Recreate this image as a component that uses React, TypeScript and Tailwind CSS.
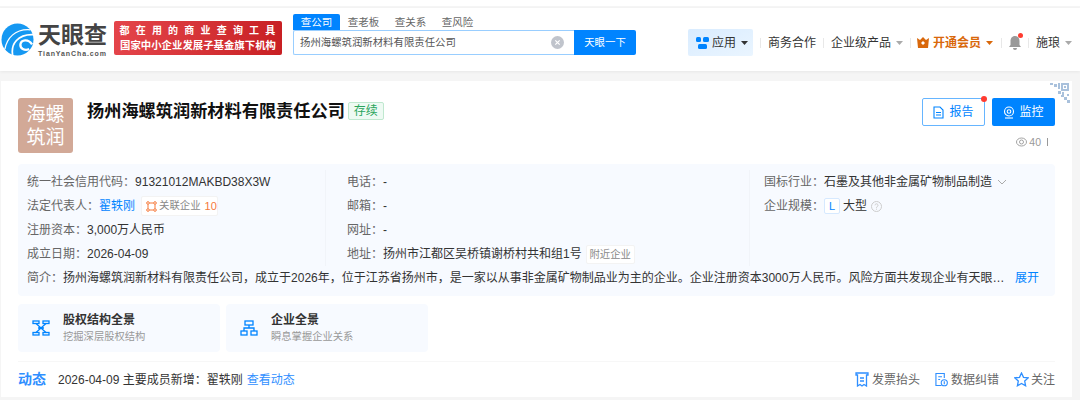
import React from "react";

const F = "[font-family:'Liberation_Sans','Noto_Sans_CJK_SC',sans-serif]";
const COLON = "\uFF1A";
const COMMA = "\uFF0C";

function Caret({ c = "#aaa" }: { c?: string }) {
  return (
    <svg width="7" height="4" viewBox="0 0 7 4" className="ml-[5px]">
      <path d="M0 0h7L3.5 4z" fill={c} />
    </svg>
  );
}

function Logo() {
  return (
    <svg width="33" height="33" viewBox="0 0 34 34">
      <circle cx="17" cy="17" r="16.5" fill="#1598f2" />
      <path d="M4 27C6 16 14 6 30 7" fill="none" stroke="#fff" strokeWidth="1.3" />
      <path d="M12 33C10 22 17 11 34 12" fill="none" stroke="#fff" strokeWidth="1.8" />
      <path d="M32 22C28 16 21 17 20 22c-.5 4 4 7 9 5" fill="none" stroke="#fff" strokeWidth="2.4" />
    </svg>
  );
}

function Divider() {
  return <span className="block w-px h-[10px] bg-[#e8e8e8]" />;
}

function Row({ label, children }: { label: string; children: React.ReactNode }) {
  return (
    <div className="h-6 flex items-center whitespace-nowrap">
      <span className="text-[#666]">{label}{COLON}</span>
      <span className="flex items-center text-[#333]">{children}</span>
    </div>
  );
}

function Entry({ icon, title, sub }: { icon: React.ReactNode; title: string; sub: string }) {
  return (
    <div className="w-[202px] h-[48px] rounded-[4px] bg-[#f7faff] flex items-center pl-[14px]">
      <span className="w-[18px] h-[18px] flex items-center justify-center">{icon}</span>
      <div className="ml-[13px]">
        <div className="text-[12px] leading-[17px] font-bold text-[#333]">{title}</div>
        <div className="text-[10.3px] leading-[15px] text-[#999]">{sub}</div>
      </div>
    </div>
  );
}

export default function App() {
  return (
    <div className={`w-[1080px] h-[400px] overflow-hidden bg-[#f5f5f5] flex flex-col ${F}`}>
      <div className="h-[6px] bg-white shrink-0" />
      <header className="mt-[2px] h-[63px] shrink-0 bg-white shadow-[0_1px_3px_rgba(0,0,0,0.06)] flex items-start">
        {/* logo */}
        <div className="ml-[1px] mt-[15px] w-[34px] h-[34px]"><Logo /></div>
        <div className="ml-[3px] mt-[14px] w-[70px]">
          <div className="text-[23px] leading-[26px] font-bold text-[#444] whitespace-nowrap">天眼查</div>
          <div className="text-[7px] leading-[9px] font-bold text-[#555] tracking-[0.9px] whitespace-nowrap mt-[1px]">TianYanCha.com</div>
        </div>
        <div className="ml-[6px] mt-[13px] w-[168px] h-[34px] rounded-[2px] bg-gradient-to-r from-[#e4444a] to-[#c81f23] text-white text-[10px] leading-[15px] font-bold flex flex-col items-center justify-center whitespace-nowrap">
          <div className="tracking-[6.2px] pl-[5px]">都在用的商业查询工具</div>
          <div className="text-[10.4px]">国家中小企业发展子基金旗下机构</div>
        </div>
        {/* search */}
        <div className="ml-[11px] mt-[6px] w-[343px]">
          <div className="flex h-[16px] text-[10.5px] leading-[16px]">
            <span className="w-[47px] text-center bg-[#0084ff] text-white rounded-t-[2px]">查公司</span>
            <span className="w-[47px] text-center text-[#666]">查老板</span>
            <span className="w-[47px] text-center text-[#666]">查关系</span>
            <span className="w-[47px] text-center text-[#666]">查风险</span>
          </div>
          <div className="flex h-[25px]">
            <div className="flex-1 border border-[#99ceff] border-r-0 rounded-l-[2px] flex items-center pl-[6px] pr-[10px] text-[10.4px] text-[#555] bg-white">
              <span className="flex-1">扬州海螺筑润新材料有限责任公司</span>
              <svg width="13" height="13" viewBox="0 0 13 13">
                <circle cx="6.5" cy="6.5" r="6.5" fill="#c0c4cc" />
                <path d="M4.3 4.3l4.400 4.400M8.700 4.300l-4.400 4.400" stroke="#fff" strokeWidth="1.2" />
              </svg>
            </div>
            <button className="w-[62px] bg-[#0084ff] text-white text-[10.4px] rounded-r-[2px]">天眼一下</button>
          </div>
        </div>
        {/* nav */}
        <nav className="ml-[52px] mt-[21px] flex items-center h-[27px] text-[12px] text-[#333] whitespace-nowrap">
          <div className="w-[65px] h-[27px] rounded-[2px] bg-gradient-to-br from-[#d9ecff] to-[#eaf5ff] flex items-center pl-[8px]">
            <svg width="13" height="12" viewBox="0 0 13 12">
              <rect x="0" y="0" width="5" height="5" rx="1.5" fill="#0084ff" />
              <rect x="7" y="0" width="6" height="5" rx="1.5" fill="#0084ff" />
              <rect x="2" y="7" width="9" height="5" rx="1.5" fill="#0084ff" />
            </svg>
            <span className="ml-[3px]">应用</span>
            <Caret c="#333" />
          </div>
          <span className="ml-[7px]"><Divider /></span>
          <span className="ml-[7px]">商务合作</span>
          <span className="ml-[7px]"><Divider /></span>
          <span className="ml-[7px]">企业级产品</span>
          <Caret />
          <span className="ml-[7px]"><Divider /></span>
          <svg width="12" height="11" viewBox="0 0 12 11" className="ml-[6px]">
            <path d="M0 1l3 2 3-3 3 3 3-2-1 10H1z" fill="#d9680b" />
            <path d="M6 4l2 2-2 2-2-2z" fill="#fff" />
          </svg>
          <span className="ml-[4px] font-bold text-[#d9680b]">开通会员</span>
          <Caret c="#d9680b" />
          <span className="ml-[8px]"><Divider /></span>
          <span className="relative ml-[7px] flex">
            <svg width="12" height="14" viewBox="0 0 12 14">
              <path d="M6 0c3 0 4.500 2.500 4.500 5v4L12 11H0l1.500-2V5C1.500 2.500 3 0 6 0z" fill="#999" />
              <path d="M4 12h4a2 2 0 0 1-4 0z" fill="#999" />
            </svg>
            <span className="absolute -top-[3px] left-[9px] w-[5px] h-[5px] rounded-full bg-[#ff3b30]" />
          </span>
          <span className="ml-[7px]"><Divider /></span>
          <span className="ml-[7px]">施琅</span>
          <Caret />
        </nav>
      </header>

      {/* card */}
      <main className="relative mt-[10px] ml-px w-[1071px] h-[316px] shrink-0 bg-white">
        <svg width="20" height="20" viewBox="0 0 20 20" className="absolute right-[2px] top-[2px]" fill="#a9c1dc">
          <rect x="0" y="0" width="3" height="2" />
          <rect x="4" y="1" width="3" height="3" />
          <rect x="8" y="0" width="2" height="6" />
          <path d="M11 0h8v8h-8zM13 2v4h4V2z" fillRule="evenodd" />
          <rect x="14" y="3" width="2" height="2" />
          <rect x="8" y="8" width="3" height="3" />
          <rect x="12" y="9" width="2" height="3" />
          <rect x="11" y="12" width="3" height="2" />
          <rect x="14" y="14" width="3" height="3" />
          <rect x="17" y="11" width="2" height="2" />
          <rect x="17" y="17" width="3" height="3" />
        </svg>
        <div className="flex items-start pl-[17px] pt-[17px]">
          <div className="w-[55px] h-[55px] rounded-[3px] bg-[#d2a997] text-white text-[19px] leading-[23px] text-center flex items-center justify-center">
            海螺<br />筑润
          </div>
          <div className="ml-[14px] mt-[4px] flex items-center">
            <h1 className="text-[17.2px] leading-[18px] font-bold text-[#111] whitespace-nowrap">扬州海螺筑润新材料有限责任公司</h1>
            <span className="ml-[3px] w-[36px] h-[18px] rounded-[2px] border border-[#bfe8cf] bg-[#eefaf3] text-[#2aa55c] text-[12px] leading-[16px] text-center">存续</span>
          </div>
          <div className="ml-auto mr-[17px] flex flex-col items-end">
            <div className="flex gap-[7px]">
              <button className="relative w-[63px] h-[28px] rounded-[2px] border border-[#66b5ff] text-[#0084ff] text-[12px] flex items-center justify-center bg-white">
                <svg width="11" height="13" viewBox="0 0 11 13" fill="none" stroke="#0084ff" strokeWidth="1.1">
                  <path d="M1 1h6l3 3v8H1z" />
                  <path d="M3 6.500h5M3 9h5" />
                </svg>
                <span className="ml-[5px]">报告</span>
                <span className="absolute -top-[3px] -right-[3px] w-[6px] h-[6px] rounded-full bg-[#ff3b30]" />
              </button>
              <button className="w-[63px] h-[28px] rounded-[2px] bg-[#0084ff] text-white text-[12px] flex items-center justify-center">
                <svg width="12" height="13" viewBox="0 0 12 13" fill="none" stroke="#fff" strokeWidth="1.1">
                  <circle cx="6" cy="5.500" r="4.500" />
                  <circle cx="6" cy="5.500" r="1.800" />
                  <path d="M2 12h8" />
                </svg>
                <span className="ml-[4px]">监控</span>
              </button>
            </div>
            <div className="mt-[9px] mr-[7px] flex items-center text-[10.5px] leading-[14px] text-[#999]">
              <svg width="11" height="10" viewBox="0 0 11 10" fill="none" stroke="#999" strokeWidth="0.9">
                <ellipse cx="5.500" cy="5" rx="5" ry="4" />
                <circle cx="5.500" cy="5" r="2" />
              </svg>
              <span className="ml-[2px]">40</span>
              <span className="ml-[6px] w-px h-[8px] bg-[#999]" />
            </div>
          </div>
        </div>

        {/* info */}
        <section className="mt-[11px] ml-[17px] w-[1037px] h-[132px] rounded-[4px] bg-[#f7faff] text-[12px] pl-[9px] pt-[6px]">
          <div className="flex">
            <div className="w-[299px] border-r border-[#f1f4f9]">
              <Row label="统一社会信用代码">91321012MAKBD38X3W</Row>
              <Row label="法定代表人">
                <span className="text-[#0084ff]">翟轶刚</span>
                <span className="ml-[6px] h-[20px] w-[77px] bg-white rounded-[2px] border border-[#f3f3f3] flex items-center pl-[4px] text-[10.4px] text-[#888]">
                  <svg width="11" height="11" viewBox="0 0 11 11" fill="none" stroke="#f5793a" strokeWidth="1">
                    <circle cx="2" cy="2" r="1.300" />
                    <circle cx="9" cy="2" r="1.300" />
                    <circle cx="2" cy="9" r="1.300" />
                    <circle cx="9" cy="9" r="1.300" />
                    <path d="M3.500 2h4M2 3.500v4M9 3.500v4M3.500 9h4" />
                  </svg>
                  <span className="ml-[2px]">关联企业</span>
                  <span className="ml-[4px] text-[11px] text-[#f5793a]">10</span>
                </span>
              </Row>
              <Row label="注册资本">3,000万人民币</Row>
              <Row label="成立日期">2026-04-09</Row>
            </div>
            <div className="w-[424px] pl-[21px] border-r border-[#f1f4f9]">
              <Row label="电话">-</Row>
              <Row label="邮箱">-</Row>
              <Row label="网址">-</Row>
              <Row label="地址">
                扬州市江都区吴桥镇谢桥村共和组1号
                <span className="ml-[4px] w-[49px] h-[19px] bg-white rounded-[2px] border border-[#f3f3f3] text-[10.4px] leading-[17px] text-center text-[#888]">附近企业</span>
              </Row>
            </div>
            <div className="pl-[14px]">
              <Row label="国标行业">
                石墨及其他非金属矿物制品制造
                <svg width="10" height="6" viewBox="0 0 10 6" className="ml-[5px]" fill="none" stroke="#aaa">
                  <path d="M1 1l4 4 4-4" />
                </svg>
              </Row>
              <Row label="企业规模">
                <span className="w-[16px] h-[16px] rounded-[2px] border border-[#d6e9ff] bg-white text-[#0084ff] text-[11px] leading-[14px] text-center">L</span>
                <span className="ml-[3px]">大型</span>
                <svg width="11" height="11" viewBox="0 0 11 11" className="ml-[4px]" fill="none" stroke="#ccc">
                  <circle cx="5.500" cy="5.500" r="5" />
                  <path d="M4 4.300a1.500 1.500 0 1 1 2.300 1.300c-.6.3-.8.600-.8 1.200M5.500 7.700v1" />
                </svg>
              </Row>
            </div>
          </div>
          <div className="h-6 flex items-center whitespace-nowrap">
            <span className="text-[#666]">简介{COLON}</span>
            <span className="w-[952px] text-[#333]">
              {`扬州海螺筑润新材料有限责任公司${COMMA}成立于2026年${COMMA}位于江苏省扬州市${COMMA}是一家以从事非金属矿物制品业为主的企业。企业注册资本3000万人民币。风险方面共发现企业有天眼…`}
            </span>
            <span className="text-[#0084ff]">展开</span>
          </div>
        </section>

        {/* entries */}
        <div className="mt-[8px] ml-[17px] flex gap-[6px]">
          <Entry
            title="股权结构全景"
            sub="挖掘深层股权结构"
            icon={
              <svg width="18" height="16" viewBox="0 0 18 16" fill="none" stroke="#0084ff" strokeWidth="1.300">
                <rect x="1" y="1" width="6" height="2.500" />
                <rect x="11" y="1" width="6" height="2.500" />
                <rect x="1" y="12.500" width="6" height="2.500" />
                <rect x="11" y="12.500" width="6" height="2.500" />
                <path d="M4 3.500L9 8l5-4.500M4 12.500L9 8l5 4.500M6 8h6" />
              </svg>
            }
          />
          <Entry
            title="企业全景"
            sub="瞬息掌握企业关系"
            icon={
              <svg width="18" height="16" viewBox="0 0 18 16" fill="none" stroke="#0084ff" strokeWidth="1.300">
                <rect x="5" y="1" width="8" height="4" />
                <rect x="1" y="11" width="6" height="4" />
                <rect x="11" y="11" width="6" height="4" />
                <path d="M9 5v3M4 11V8h10v3" />
              </svg>
            }
          />
        </div>

        {/* activity */}
        <div className="mt-[9px] mx-[17px] border-t border-[#f7f7f7] h-[36px] flex items-center text-[12px] text-[#333] whitespace-nowrap">
          <span className="text-[14px] font-bold text-[#2f8fff]">动态</span>
          <span className="ml-[12px]">2026-04-09 主要成员新增{COLON}翟轶刚</span>
          <span className="ml-[4px] text-[#2f8fff]">查看动态</span>
          <div className="ml-auto flex items-center text-[#666]">
            <svg width="14" height="15" viewBox="0 0 14 15" fill="none" stroke="#2f8fff" strokeWidth="1.300">
              <path d="M1 1h12v2h-1.500v11L9 12.500 7 14l-2-1.500L2.500 14V3H1z" />
              <path d="M5 6h4M5 9h4" />
            </svg>
            <span className="ml-[3px]">发票抬头</span>
            <svg width="13" height="15" viewBox="0 0 14 15" fill="none" stroke="#2f8fff" strokeWidth="1.200" className="ml-[15px]">
              <path d="M7 14H1V1h9v5" />
              <path d="M3.500 4.500h4M3.500 7.500h2" />
              <circle cx="10" cy="11" r="3.300" />
              <path d="M10 9.500v3" />
            </svg>
            <span className="ml-[3px]">数据纠错</span>
            <svg width="15" height="15" viewBox="0 0 15 15" fill="none" stroke="#2f8fff" strokeWidth="1.300" className="ml-[15px]">
              <path d="M7.500 1l2 4.300 4.700.6-3.500 3.200.9 4.700-4.100-2.300-4.100 2.300.9-4.700L.8 5.900l4.700-.6z" />
            </svg>
            <span className="ml-[2px]">关注</span>
          </div>
        </div>
      </main>
    </div>
  );
}
